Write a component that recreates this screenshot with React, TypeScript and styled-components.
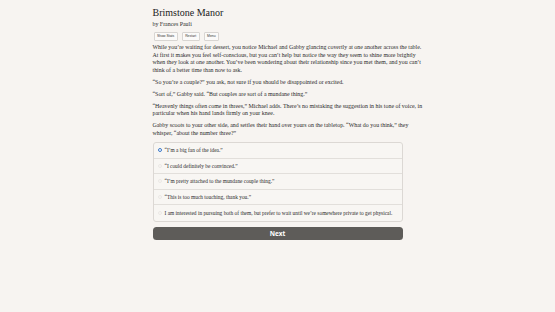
import React, { useState } from "react";
import styled, { createGlobalStyle } from "styled-components";

const GlobalStyle = createGlobalStyle`
  html, body {
    margin: 0;
    padding: 0;
    background: #f7f4f1;
  }
  body {
    font-family: "Liberation Serif", "Times New Roman", serif;
    color: #2b2b2b;
  }
`;

const Page = styled.main`
  width: 250px;
  margin: 0 auto;
  padding-top: 7px;
`;

const Title = styled.h1`
  margin: 0;
  font-size: 10px;
  font-weight: normal;
  line-height: 12px;
  color: #222;
`;

const Author = styled.div`
  font-size: 5.9px;
  line-height: 8px;
  margin-top: 1px;
`;

const Toolbar = styled.div`
  display: flex;
  gap: 4px;
  margin: 4px 0 3px 1px;
`;

const ToolButton = styled.button`
  font-family: "Liberation Sans", Arial, sans-serif;
  font-size: 3.4px;
  line-height: 5px;
  padding: 1px 2.5px;
  background: #fbfaf9;
  border: 0.5px solid #d8d5d2;
  border-radius: 1px;
  color: #333;
`;

const Para = styled.p`
  margin: 0 0 4.5px;
  font-size: 5.9px;
  line-height: 7.5px;
  white-space: nowrap;
`;

const Choices = styled.fieldset`
  margin: 5px 0 0;
  padding: 0;
  border: 0.6px solid #dcd8d4;
  border-radius: 3px;
  background: #f8f6f3;
`;

const ChoiceRow = styled.label<{ $last?: boolean }>`
  display: flex;
  align-items: center;
  gap: 3px;
  height: 15.6px;
  padding-left: 4px;
  font-size: 5.4px;
  border-bottom: ${(p) => (p.$last ? "none" : "0.6px solid #e2dfdb")};
  box-sizing: border-box;
`;

const Radio = styled.span<{ $on?: boolean }>`
  width: 4px;
  height: 4px;
  border-radius: 50%;
  box-sizing: border-box;
  flex: none;
  background: ${(p) => (p.$on ? "#fff" : "transparent")};
  border: ${(p) => (p.$on ? "1.3px solid #3a78c9" : "0.4px solid #ece9e6")};
`;

const NextButton = styled.button`
  display: block;
  width: 100%;
  margin-top: 5px;
  height: 13px;
  border: none;
  border-radius: 3.5px;
  background: #5e5c59;
  color: #fff;
  font-family: "Open Sans", "Liberation Sans", sans-serif;
  font-weight: 700;
  font-size: 6.5px;
`;

const options = [
  "\u201CI\u2019m a big fan of the idea.\u201D",
  "\u201CI could definitely be convinced.\u201D",
  "\u201CI\u2019m pretty attached to the mundane couple thing.\u201D",
  "\u201CThis is too much touching, thank you.\u201D",
  "I am interested in pursuing both of them, but prefer to wait until we\u2019re somewhere private to get physical.",
];

export default function App() {
  const [picked, setPicked] = useState(0);
  return (
    <>
      <GlobalStyle />
      <Page>
        <Title>Brimstone Manor</Title>
        <Author>by Frances Pauli</Author>
        <Toolbar>
          <ToolButton>Show Stats</ToolButton>
          <ToolButton>Restart</ToolButton>
          <ToolButton>Menu</ToolButton>
        </Toolbar>
        <Para>
          While you&rsquo;re waiting for dessert, you notice Michael and Gabby glancing covertly at one another across the table.
          <br />
          At first it makes you feel self-conscious, but you can&rsquo;t help but notice the way they seem to shine more brightly
          <br />
          when they look at one another. You&rsquo;ve been wondering about their relationship since you met them, and you can&rsquo;t
          <br />
          think of a better time than now to ask.
        </Para>
        <Para>&ldquo;So you&rsquo;re a couple?&rdquo; you ask, not sure if you should be disappointed or excited.</Para>
        <Para>&ldquo;Sort of,&rdquo; Gabby said. &ldquo;But couples are sort of a mundane thing.&rdquo;</Para>
        <Para>
          &ldquo;Heavenly things often come in threes,&rdquo; Michael adds. There&rsquo;s no mistaking the suggestion in his tone of voice, in
          <br />
          particular when his hand lands firmly on your knee.
        </Para>
        <Para>
          Gabby scoots to your other side, and settles their hand over yours on the tabletop. &ldquo;What do you think,&rdquo; they
          <br />
          whisper, &ldquo;about the number three?&rdquo;
        </Para>
        <Choices>
          {options.map((o, i) => (
            <ChoiceRow key={i} $last={i === options.length - 1} onClick={() => setPicked(i)}>
              <Radio $on={picked === i} />
              {o}
            </ChoiceRow>
          ))}
        </Choices>
        <NextButton>Next</NextButton>
      </Page>
    </>
  );
}
